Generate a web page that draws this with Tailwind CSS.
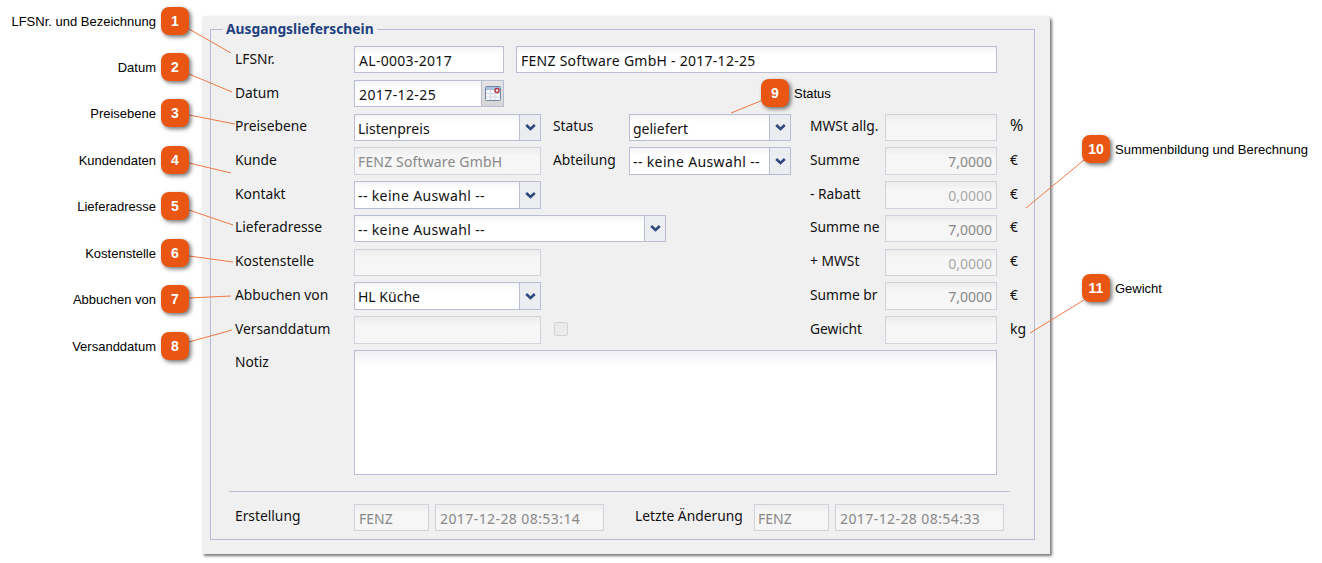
<!DOCTYPE html>
<html lang="de">
<head>
    <meta charset="UTF-8">
    <title>Ausgangslieferschein</title>
    <script src="https://cdn.jsdelivr.net/npm/@tailwindcss/browser@4"></script>
</head>
<body class="bg-white">
<div class="relative w-[1322px] h-[563px] overflow-hidden font-['Noto_Sans',sans-serif] text-[13.8px] text-[#111]">

    <!-- Form panel -->
    <div class="ml-[202px] mt-[16px] w-[848px] h-[538px] pt-[3px] px-[8px] bg-[#f0f0f0] rounded-t-[4px] shadow-[2px_2px_3px_rgba(0,0,0,0.55)]">
        <fieldset class="w-[825px] h-[521px] border border-[#b6bcd4]">
            <legend class="ml-[12px] px-[3px] font-bold leading-[20px] text-[#1f3f80]">Ausgangslieferschein</legend>

            <div class="grid grid-cols-[119px_187px_88px_162px_94px_112px_28px] grid-rows-[34px_34px_33px_34px_34px_34px_33px_34px_34px_125px] ml-[24px] mt-[7px] items-start">
                <!-- Row 1 -->
                <div class="leading-[25px]">LFSNr.</div>
                <div class="col-span-5 flex gap-[12px]">
                    <div class="w-[150px] h-[27px] flex items-center pl-[4px] pt-[1px] text-[14px] tracking-[0.3px] bg-gradient-to-b from-[#f4f4f6] to-white to-30% border border-[#b9bdd6]">AL-0003-2017</div>
                    <div class="flex-1 h-[27px] flex items-center pl-[4px] pt-[1px] text-[14px] tracking-[0.26px] bg-gradient-to-b from-[#f4f4f6] to-white to-30% border border-[#b9bdd6]">FENZ Software GmbH - 2017-12-25</div>
                </div>
                <div></div>

                <!-- Row 2 -->
                <div class="leading-[25px]">Datum</div>
                <div class="col-span-6 flex">
                    <div class="w-[128px] h-[27px] flex items-center pl-[4px] pt-[1px] text-[14px] tracking-[0.4px] bg-gradient-to-b from-[#f4f4f6] to-white to-30% border border-[#b9bdd6]">2017-12-25</div>
                    <div class="w-[22px] h-[27px] flex items-center justify-center bg-gradient-to-b from-[#e4e4e6] to-[#d6d6d6] border border-l-0 border-[#b9bdd6]">
                        <svg width="16" height="17" viewBox="0 0 16 17">
                            <rect x="0.5" y="1.5" width="15" height="14" rx="1" fill="#f4f6fb" stroke="#6f86a8"/>
                            <rect x="1" y="2" width="14" height="3" fill="#a9c0dc"/>
                            <path d="M1 8.5h14M1 12h14M5.5 5v10M10 5v10" stroke="#d3d9e4"/>
                            <circle cx="12" cy="5.5" r="2" fill="#fff" stroke="#a8323a" stroke-width="1.4"/>
                        </svg>
                    </div>
                </div>

                <!-- Row 3 -->
                <div class="leading-[23px]">Preisebene</div>
                <div class="flex h-[27px] bg-gradient-to-b from-[#f4f4f6] to-white to-30% border border-[#b9bdd6]">
                    <div class="flex-1 flex items-center pl-[3px] pt-[1px] text-[14px]">Listenpreis</div>
                    <div class="w-[21px] flex items-center justify-center bg-[#ecedf1] border-l border-[#b9bdd6]">
                        <svg width="11" height="7" viewBox="0 0 11 7"><path d="M1.2 1l4.3 4 4.3-4" fill="none" stroke="#2d4a80" stroke-width="2.6"/></svg>
                    </div>
                </div>
                <div class="pl-[12px] leading-[23px]">Status</div>
                <div class="flex h-[27px] bg-gradient-to-b from-[#f4f4f6] to-white to-30% border border-[#b9bdd6]">
                    <div class="flex-1 flex items-center pl-[3px] pt-[1px] text-[14px]">geliefert</div>
                    <div class="w-[21px] flex items-center justify-center bg-[#ecedf1] border-l border-[#b9bdd6]">
                        <svg width="11" height="7" viewBox="0 0 11 7"><path d="M1.2 1l4.3 4 4.3-4" fill="none" stroke="#2d4a80" stroke-width="2.6"/></svg>
                    </div>
                </div>
                <div class="pl-[19px] leading-[23px]">MWSt allg.</div>
                <div class="h-[27px] bg-gradient-to-b from-[#ececec] to-[#f6f6f6] to-30% border border-[#d0d2de]"></div>
                <div class="pl-[13px] leading-[23px] text-[16px]">%</div>

                <!-- Row 4 -->
                <div class="leading-[25px]">Kunde</div>
                <div class="h-[28px] flex items-center pl-[3px] pt-[1px] text-[14px] tracking-[0.15px] text-[#888] bg-gradient-to-b from-[#ececec] to-[#f6f6f6] to-30% border border-[#d0d2de]">FENZ Software GmbH</div>
                <div class="pl-[12px] leading-[25px]">Abteilung</div>
                <div class="flex h-[28px] bg-gradient-to-b from-[#f4f4f6] to-white to-30% border border-[#b9bdd6]">
                    <div class="flex-1 flex items-center pl-[3px] pt-[1px] text-[14px] tracking-[0.37px]">-- keine Auswahl --</div>
                    <div class="w-[21px] flex items-center justify-center bg-[#ecedf1] border-l border-[#b9bdd6]">
                        <svg width="11" height="7" viewBox="0 0 11 7"><path d="M1.2 1l4.3 4 4.3-4" fill="none" stroke="#2d4a80" stroke-width="2.6"/></svg>
                    </div>
                </div>
                <div class="pl-[19px] leading-[25px]">Summe</div>
                <div class="h-[28px] flex items-center justify-end pr-[4px] pt-[1px] text-[14px] text-[#888] bg-gradient-to-b from-[#ececec] to-[#f6f6f6] to-30% border border-[#d0d2de]">7,0000</div>
                <div class="pl-[13px] leading-[25px]">€</div>

                <!-- Row 5 -->
                <div class="leading-[25px]">Kontakt</div>
                <div class="col-span-3 flex">
                    <div class="w-[187px] flex h-[28px] bg-gradient-to-b from-[#f4f4f6] to-white to-30% border border-[#b9bdd6]">
                        <div class="flex-1 flex items-center pl-[3px] pt-[1px] text-[14px] tracking-[0.37px]">-- keine Auswahl --</div>
                        <div class="w-[21px] flex items-center justify-center bg-[#ecedf1] border-l border-[#b9bdd6]">
                            <svg width="11" height="7" viewBox="0 0 11 7"><path d="M1.2 1l4.3 4 4.3-4" fill="none" stroke="#2d4a80" stroke-width="2.6"/></svg>
                        </div>
                    </div>
                </div>
                <div class="pl-[19px] leading-[25px]">- Rabatt</div>
                <div class="h-[28px] flex items-center justify-end pr-[4px] pt-[1px] text-[14px] text-[#aaa] bg-gradient-to-b from-[#ececec] to-[#f6f6f6] to-30% border border-[#d0d2de]">0,0000</div>
                <div class="pl-[13px] leading-[25px]">€</div>

                <!-- Row 6 -->
                <div class="leading-[23px]">Lieferadresse</div>
                <div class="col-span-3 flex">
                    <div class="w-[312px] flex h-[27px] bg-gradient-to-b from-[#f4f4f6] to-white to-30% border border-[#b9bdd6]">
                        <div class="flex-1 flex items-center pl-[3px] pt-[1px] text-[14px] tracking-[0.37px]">-- keine Auswahl --</div>
                        <div class="w-[21px] flex items-center justify-center bg-[#ecedf1] border-l border-[#b9bdd6]">
                            <svg width="11" height="7" viewBox="0 0 11 7"><path d="M1.2 1l4.3 4 4.3-4" fill="none" stroke="#2d4a80" stroke-width="2.6"/></svg>
                        </div>
                    </div>
                </div>
                <div class="pl-[19px] leading-[23px]">Summe ne</div>
                <div class="h-[27px] flex items-center justify-end pr-[4px] pt-[1px] text-[14px] text-[#888] bg-gradient-to-b from-[#ececec] to-[#f6f6f6] to-30% border border-[#d0d2de]">7,0000</div>
                <div class="pl-[13px] leading-[23px]">€</div>

                <!-- Row 7 -->
                <div class="leading-[23px]">Kostenstelle</div>
                <div class="h-[27px] bg-gradient-to-b from-[#ececec] to-[#f6f6f6] to-30% border border-[#d0d2de]"></div>
                <div class="col-span-2"></div>
                <div class="pl-[19px] leading-[23px]">+ MWSt</div>
                <div class="h-[27px] flex items-center justify-end pr-[4px] pt-[1px] text-[14px] text-[#aaa] bg-gradient-to-b from-[#ececec] to-[#f6f6f6] to-30% border border-[#d0d2de]">0,0000</div>
                <div class="pl-[13px] leading-[23px]">€</div>

                <!-- Row 8 -->
                <div class="leading-[25px]">Abbuchen von</div>
                <div class="flex h-[28px] bg-gradient-to-b from-[#f4f4f6] to-white to-30% border border-[#b9bdd6]">
                    <div class="flex-1 flex items-center pl-[3px] pt-[1px] text-[14px]">HL Küche</div>
                    <div class="w-[21px] flex items-center justify-center bg-[#ecedf1] border-l border-[#b9bdd6]">
                        <svg width="11" height="7" viewBox="0 0 11 7"><path d="M1.2 1l4.3 4 4.3-4" fill="none" stroke="#2d4a80" stroke-width="2.6"/></svg>
                    </div>
                </div>
                <div class="col-span-2"></div>
                <div class="pl-[19px] leading-[25px]">Summe br</div>
                <div class="h-[28px] flex items-center justify-end pr-[4px] pt-[1px] text-[14px] text-[#888] bg-gradient-to-b from-[#ececec] to-[#f6f6f6] to-30% border border-[#d0d2de]">7,0000</div>
                <div class="pl-[13px] leading-[25px]">€</div>

                <!-- Row 9 -->
                <div class="leading-[25px]">Versanddatum</div>
                <div class="h-[28px] bg-gradient-to-b from-[#ececec] to-[#f6f6f6] to-30% border border-[#d0d2de]"></div>
                <div class="col-span-2 pl-[13px] pt-[6px]">
                    <div class="w-[14px] h-[14px] rounded-[2px] bg-[#ebebeb] border border-[#d4d4d8]"></div>
                </div>
                <div class="pl-[19px] leading-[25px]">Gewicht</div>
                <div class="h-[28px] bg-gradient-to-b from-[#ececec] to-[#f6f6f6] to-30% border border-[#d0d2de]"></div>
                <div class="pl-[13px] leading-[25px] text-[14px]">kg</div>

                <!-- Row 10: Notiz -->
                <div class="leading-[23px]">Notiz</div>
                <div class="col-span-5 h-[125px] bg-gradient-to-b from-[#f0f0f3] to-white to-[12%] border border-[#b9bdd6]"></div>
            </div>

            <!-- Footer -->
            <div class="ml-[18px] mr-[24px] mt-[16px] border-t border-[#b9bdd6]"></div>
            <div class="flex items-start ml-[24px] mt-[12px] h-[27px]">
                <div class="w-[119px] leading-[23px]">Erstellung</div>
                <div class="w-[75px] h-[27px] flex items-center pl-[4px] pt-[1px] text-[14px] text-[#888] bg-gradient-to-b from-[#ececec] to-[#f6f6f6] to-30% border border-[#d0d2de]">FENZ</div>
                <div class="w-[169px] h-[27px] ml-[6px] flex items-center pl-[4px] pt-[1px] text-[14px] tracking-[0.42px] text-[#888] bg-gradient-to-b from-[#ececec] to-[#f6f6f6] to-30% border border-[#d0d2de]">2017-12-28 08:53:14</div>
                <div class="w-[119px] ml-[31px] leading-[23px]">Letzte Änderung</div>
                <div class="w-[75px] h-[27px] flex items-center pl-[3px] pt-[1px] text-[14px] text-[#888] bg-gradient-to-b from-[#ececec] to-[#f6f6f6] to-30% border border-[#d0d2de]">FENZ</div>
                <div class="w-[169px] h-[27px] ml-[6px] flex items-center pl-[4px] pt-[1px] text-[14px] tracking-[0.42px] text-[#888] bg-gradient-to-b from-[#ececec] to-[#f6f6f6] to-30% border border-[#d0d2de]">2017-12-28 08:54:33</div>
            </div>
        </fieldset>
    </div>

    <!-- Callout lines -->
    <svg class="absolute left-0 top-0 pointer-events-none" width="1322" height="563" fill="none" stroke="#ef7a45" stroke-width="1">
        <path d="M189 29L231 53"/>
        <path d="M189 74L232 92"/>
        <path d="M189 115L235 124"/>
        <path d="M189 163L231 173"/>
        <path d="M189 210L233 225"/>
        <path d="M189 256L233 262"/>
        <path d="M189 298L231 296"/>
        <path d="M189 342L232 330"/>
        <path d="M763 100L731 113"/>
        <path d="M1084 160L1026 208"/>
        <path d="M1084 300L1030 333"/>
    </svg>

    <!-- Callout captions -->
    <div class="absolute right-[1166px] top-[14px] font-['Liberation_Sans',sans-serif] text-[13px] leading-[16px] text-black whitespace-nowrap">LFSNr. und Bezeichnung</div>
    <div class="absolute right-[1166px] top-[60px] font-['Liberation_Sans',sans-serif] text-[13px] leading-[16px] text-black">Datum</div>
    <div class="absolute right-[1166px] top-[106px] font-['Liberation_Sans',sans-serif] text-[13px] leading-[16px] text-black">Preisebene</div>
    <div class="absolute right-[1166px] top-[153px] font-['Liberation_Sans',sans-serif] text-[13px] leading-[16px] text-black">Kundendaten</div>
    <div class="absolute right-[1166px] top-[199px] font-['Liberation_Sans',sans-serif] text-[13px] leading-[16px] text-black">Lieferadresse</div>
    <div class="absolute right-[1166px] top-[246px] font-['Liberation_Sans',sans-serif] text-[13px] leading-[16px] text-black">Kostenstelle</div>
    <div class="absolute right-[1166px] top-[292px] font-['Liberation_Sans',sans-serif] text-[13px] leading-[16px] text-black">Abbuchen von</div>
    <div class="absolute right-[1166px] top-[339px] font-['Liberation_Sans',sans-serif] text-[13px] leading-[16px] text-black">Versanddatum</div>
    <div class="absolute left-[794px] top-[86px] font-['Liberation_Sans',sans-serif] text-[13px] leading-[16px] text-black">Status</div>
    <div class="absolute left-[1115px] top-[142px] font-['Liberation_Sans',sans-serif] text-[13px] leading-[16px] text-black whitespace-nowrap">Summenbildung und Berechnung</div>
    <div class="absolute left-[1115px] top-[281px] font-['Liberation_Sans',sans-serif] text-[13px] leading-[16px] text-black">Gewicht</div>

    <!-- Callout badges -->
    <div class="absolute left-[161px] top-[7px] w-[28px] h-[28px] flex items-center justify-center rounded-[8px] bg-[#e95614] shadow-[2px_2px_4px_rgba(0,0,0,0.55)] font-['Liberation_Sans',sans-serif] font-bold text-[14px] text-white">1</div>
    <div class="absolute left-[161px] top-[53px] w-[28px] h-[28px] flex items-center justify-center rounded-[8px] bg-[#e95614] shadow-[2px_2px_4px_rgba(0,0,0,0.55)] font-['Liberation_Sans',sans-serif] font-bold text-[14px] text-white">2</div>
    <div class="absolute left-[161px] top-[99px] w-[28px] h-[28px] flex items-center justify-center rounded-[8px] bg-[#e95614] shadow-[2px_2px_4px_rgba(0,0,0,0.55)] font-['Liberation_Sans',sans-serif] font-bold text-[14px] text-white">3</div>
    <div class="absolute left-[161px] top-[146px] w-[28px] h-[28px] flex items-center justify-center rounded-[8px] bg-[#e95614] shadow-[2px_2px_4px_rgba(0,0,0,0.55)] font-['Liberation_Sans',sans-serif] font-bold text-[14px] text-white">4</div>
    <div class="absolute left-[161px] top-[192px] w-[28px] h-[28px] flex items-center justify-center rounded-[8px] bg-[#e95614] shadow-[2px_2px_4px_rgba(0,0,0,0.55)] font-['Liberation_Sans',sans-serif] font-bold text-[14px] text-white">5</div>
    <div class="absolute left-[161px] top-[239px] w-[28px] h-[28px] flex items-center justify-center rounded-[8px] bg-[#e95614] shadow-[2px_2px_4px_rgba(0,0,0,0.55)] font-['Liberation_Sans',sans-serif] font-bold text-[14px] text-white">6</div>
    <div class="absolute left-[161px] top-[285px] w-[28px] h-[28px] flex items-center justify-center rounded-[8px] bg-[#e95614] shadow-[2px_2px_4px_rgba(0,0,0,0.55)] font-['Liberation_Sans',sans-serif] font-bold text-[14px] text-white">7</div>
    <div class="absolute left-[161px] top-[332px] w-[28px] h-[28px] flex items-center justify-center rounded-[8px] bg-[#e95614] shadow-[2px_2px_4px_rgba(0,0,0,0.55)] font-['Liberation_Sans',sans-serif] font-bold text-[14px] text-white">8</div>
    <div class="absolute left-[761px] top-[79px] w-[28px] h-[28px] flex items-center justify-center rounded-[8px] bg-[#e95614] shadow-[2px_2px_4px_rgba(0,0,0,0.55)] font-['Liberation_Sans',sans-serif] font-bold text-[14px] text-white">9</div>
    <div class="absolute left-[1082px] top-[135px] w-[28px] h-[28px] flex items-center justify-center rounded-[8px] bg-[#e95614] shadow-[2px_2px_4px_rgba(0,0,0,0.55)] font-['Liberation_Sans',sans-serif] font-bold text-[14px] text-white">10</div>
    <div class="absolute left-[1082px] top-[274px] w-[28px] h-[28px] flex items-center justify-center rounded-[8px] bg-[#e95614] shadow-[2px_2px_4px_rgba(0,0,0,0.55)] font-['Liberation_Sans',sans-serif] font-bold text-[14px] text-white">11</div>
</div>
</body>
</html>
